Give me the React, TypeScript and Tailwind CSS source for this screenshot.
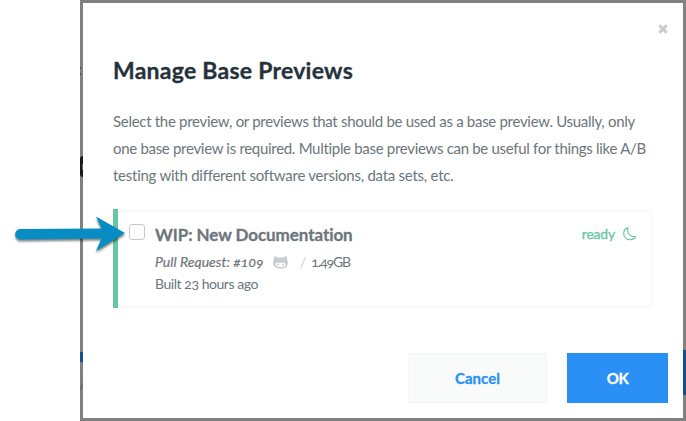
import React from "react";

function CatIcon() {
  return (
    <svg width="15" height="13" viewBox="0 0 15 13" className="shrink-0">
      <path
        fillRule="evenodd"
        fill="#c9cccf"
        d="M1.3 0.3C2.6 0.3 3.8 1 4.6 1.6C6.5 1.3 8.5 1.3 10.4 1.6C11.2 1 12.4 0.3 13.7 0.3C14.2 1.6 14.2 2.7 14 3.5C14.9 4.6 15 6.2 14.7 8C14.2 11 11.9 12.5 7.5 12.5C3.1 12.5 0.8 11 0.3 8C0 6.2 0.1 4.6 1 3.5C0.8 2.7 0.8 1.6 1.3 0.3ZM4.2 6.4C3 6.4 2.6 7.2 2.6 8.4C2.6 10.4 4.2 11.1 7.5 11.1C10.8 11.1 12.4 10.4 12.4 8.4C12.4 7.2 12 6.4 10.8 6.4C9.6 6.4 8.8 6.7 7.5 6.7C6.2 6.7 5.4 6.4 4.2 6.4Z"
      />
      <ellipse cx="4.9" cy="8.5" rx="0.8" ry="1.2" fill="#c9cccf" />
      <ellipse cx="10.1" cy="8.5" rx="0.8" ry="1.2" fill="#c9cccf" />
    </svg>
  );
}

function MoonIcon() {
  return (
    <svg width="14" height="14" viewBox="0 0 14 14" className="shrink-0">
      <path
        d="M5.2 0.9C2.5 1.5 0.7 3.7 0.7 6.5C0.7 10.2 3.5 12.8 7 12.8C9.6 12.8 11.7 11.5 12.6 9.3C8.2 10.3 3.1 6.9 5.2 0.9Z"
        fill="none"
        stroke="#65c7a0"
        strokeWidth="1.1"
        strokeLinejoin="round"
      />
    </svg>
  );
}

function Arrow() {
  return (
    <svg
      width="120"
      height="50"
      viewBox="0 0 120 50"
      className="absolute left-[10px] top-[208px] drop-shadow-[0_2px_1px_rgba(0,0,0,0.5)]"
    >
      <path
        d="M10.5 21L91.5 20.5L86 8.5L115 25L86 43L91.5 30.5L10.5 31.5C3.5 31.5 3.5 21 10.5 21Z"
        fill="#078dc4"
      />
    </svg>
  );
}

export default function App() {
  return (
    <div className="relative h-[421px] w-[686px] overflow-hidden bg-white pl-[80px] font-['Lato',sans-serif] text-[#6c767b] [font-variant-ligatures:none]">
      <div className="flex h-[421px] w-[606px] flex-col border-[3px] border-[#808080] bg-white pl-[30px] pr-[15px]">
        <div className="flex h-[50px] justify-end pt-[21px]">
          <svg width="10" height="10" viewBox="0 0 10 10">
            <path d="M1.3 1.3L8.7 8.7M8.7 1.3L1.3 8.7" stroke="#c9c9c9" strokeWidth="3" />
          </svg>
        </div>
        <h1 className="h-[55px] whitespace-nowrap text-[23px] font-bold leading-[35px] tracking-[0.25px] text-[#25323b] [-webkit-text-stroke:0.3px]">
          Manage Base Previews
        </h1>
        <div className="h-[101px] whitespace-nowrap text-[15px] leading-[27px]">
          <p className="tracking-[-0.295px]">Select the preview, or previews that should be used as a base preview. Usually, only</p>
          <p className="tracking-[-0.305px]">one base preview is required. Multiple base previews can be useful for things like A/B</p>
          <p className="tracking-[-0.25px]">testing with different software versions, data sets, etc.</p>
        </div>
        <section className="flex h-[99px] w-[540px]">
          <div className="w-[5px] bg-[#65c7a0]" />
          <div className="flex flex-1 border-y-[3px] border-r-[3px] border-[#fafafa]">
            <div className="ml-[11px] mt-[12px] h-4 w-4 shrink-0 rounded-[3px] border border-[#c8c8c8] bg-white" />
            <div className="ml-[10px] flex-1 whitespace-nowrap pt-[9px] text-[14px] leading-[22px]">
              <h2 className="h-[30px] text-[17px] font-bold leading-[28px] tracking-[-0.07px] [-webkit-text-stroke:0.3px]">
                WIP: New Documentation
              </h2>
              <div className="flex h-[22px] items-center oldstyle-nums">
                <em className="w-[118px] tracking-[0.03px] [-webkit-text-stroke:0.2px]">Pull Request: #109</em>
                <CatIcon />
                <span className="ml-[12px] text-[#c9cccf]">/</span>
                <span className="ml-[5px] tracking-[-1.1px]">1.49GB</span>
              </div>
              <p className="tracking-[-0.45px] oldstyle-nums">Built 23 hours ago</p>
            </div>
            <div className="mr-[13px] mt-[10px] flex h-[24px] items-center gap-[8px] text-[14px] tracking-[-0.2px] text-[#65c7a0] [-webkit-text-stroke:0.3px]">
              <span className="-mt-px">ready</span>
              <MoonIcon />
            </div>
          </div>
        </section>
        <div className="mt-[45px] flex justify-end gap-[20px] text-[15px] font-bold [-webkit-text-stroke:0.3px]">
          <button className="h-[50px] w-[139px] border border-[#f5f6f6] bg-[#f9fbfb] pt-px text-[#2a90f5]">Cancel</button>
          <button className="h-[50px] w-[101px] bg-[#2a90f5] pt-px tracking-[-0.5px] text-white">OK</button>
        </div>
      </div>
      <div className="absolute left-[80px] top-[67px] h-[2px] w-[1px] bg-[#17588f]" />
      <div className="absolute left-[80px] top-[73px] h-[2px] w-[1px] bg-[#17588f]" />
      <div className="absolute left-[80px] top-[156px] h-[21px] w-[3px] rounded-l-[3px] bg-[#141b20]" />
      <div className="absolute left-[82px] top-[164px] h-[6px] w-[1px] bg-[#646669]" />
      <div className="absolute left-[80px] top-[352px] h-[10px] w-[3px] bg-[#17508a]" />
      <div className="absolute left-[81px] top-[383px] h-[7px] w-[1px] rotate-12 bg-[#626262]" />
      <div className="absolute left-[683px] top-[350px] h-[45px] w-[3px] bg-[#17508a]" />
      <Arrow />
    </div>
  );
}
